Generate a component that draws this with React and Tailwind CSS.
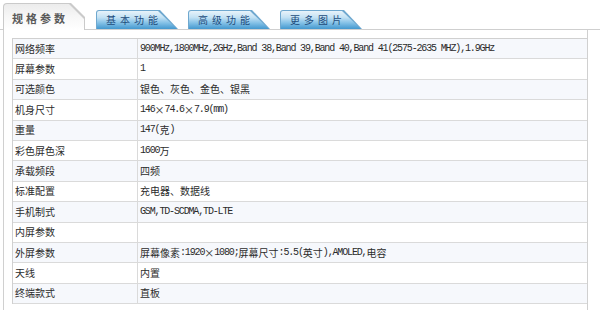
const rows = [
  ['网络频率', '900MHz,1800MHz,2GHz,Band 38,Band 39,Band 40,Band 41(2575-2635 MHZ),1.9GHz'],
  ['屏幕参数', '1'],
  ['可选颜色', '银色、灰色、金色、银黑'],
  ['机身尺寸', '146×74.6×7.9(mm)'],
  ['重量', '147(克)'],
  ['彩色屏色深', '1600万'],
  ['承载频段', '四频'],
  ['标准配置', '充电器、数据线'],
  ['手机制式', 'GSM,TD-SCDMA,TD-LTE'],
  ['内屏参数', ''],
  ['外屏参数', '屏幕像素:1920×1080;屏幕尺寸:5.5(英寸),AMOLED,电容'],
  ['天线', '内置'],
  ['终端款式', '直板'],
];

const tabs = ['基本功能', '高级功能', '更多图片'];

// latin runs get a narrow mono face, like the old song-ti half-width glyphs
function Mixed({ text }) {
  const parts = text.split(/([\x20-\x7e]+|×)/).filter(Boolean);
  return (
    <>
      {parts.map((p, i) =>
        p === '×' ? (
          <span key={i} className="inline-block w-[10px] text-center">×</span>
        ) : /^[\x20-\x7e]+$/.test(p) ? (
          <span key={i} className="font-['Liberation_Mono',monospace] tracking-[-1.15px] whitespace-pre">{p}</span>
        ) : (
          <span key={i}>{p}</span>
        )
      )}
    </>
  );
}

function BlueTab({ label }) {
  return (
    <div className="h-[19px] w-[82px] pt-px pl-px pr-px bg-[#6fa8cf] rounded-tl-[3px] [clip-path:polygon(0_0,calc(100%-18px)_0,100%_100%,0_100%)]">
      <div className="h-full flex items-center pl-[9px] rounded-tl-[2px] bg-[linear-gradient(to_bottom,#e8f3fa_0%,#c4e2f4_35%,#86c2e7_65%,#4398cf_100%)] [clip-path:polygon(0_0,calc(100%-19px)_0,100%_100%,0_100%)]">
        <span className="text-[10px] leading-none tracking-[4px] text-[#1e4c7c]">{label}</span>
      </div>
    </div>
  );
}

export default function App() {
  return (
    <div className="w-[600px] h-[310px] bg-white overflow-hidden font-['Noto_Sans_CJK_SC',sans-serif]">
      <div className="flex items-end h-[30px] pl-[3px] border-b border-[#cfcfcf]">
        <div className="relative -mb-px h-[27px] w-[82px] pt-px pl-px pr-px bg-[#cacaca] rounded-tl-[4px] [clip-path:polygon(0_0,calc(100%-14px)_0,100%_14px,100%_100%,0_100%)]">
          <div className="h-full flex items-center pl-[8px] pt-[2px] rounded-tl-[3px] bg-[linear-gradient(to_bottom,#ececec_0%,#f7f7f7_50%,#ffffff_100%)] [clip-path:polygon(0_0,calc(100%-15px)_0,100%_15px,100%_100%,0_100%)]">
            <span className="text-[11px] leading-none font-bold tracking-[3px] text-[#5a5a5a]">规格参数</span>
          </div>
        </div>
        <div className="flex items-end gap-[10px] ml-[11px]">
          {tabs.map((t) => (
            <BlueTab key={t} label={t} />
          ))}
        </div>
      </div>

      <div className="ml-[3px] w-[585px] h-[280px] border-l border-r border-[#d0d0d0] pt-[8px] pl-[8px]">
        <div className="border-t border-l border-[#d0d0d0]">
          {rows.map(([label, value], i) => (
            <div
              key={label}
              className={`flex h-[20.4px] border-b border-[#dadada] text-[10px] leading-none text-[#2b2b2b] ${i % 2 === 0 ? 'bg-[#f6f8fc]' : 'bg-white'}`}
            >
              <div className="w-[125px] shrink-0 flex items-center pl-[2px] border-r border-[#dadada]">{label}</div>
              <div className="flex-1 flex items-center pl-[2px] whitespace-nowrap">
                <Mixed text={value} />
              </div>
            </div>
          ))}
        </div>
      </div>
    </div>
  );
}
